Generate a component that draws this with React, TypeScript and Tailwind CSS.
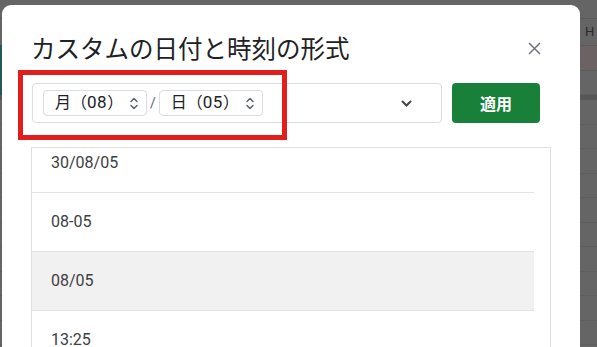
import React from 'react';

const jp = { fontFamily: '"Noto Sans CJK JP", "Noto Sans", sans-serif' };
const rb = { fontFamily: 'Roboto, "Noto Sans CJK JP", sans-serif' };

const UpDown = () => (
  <svg width="8" height="13" viewBox="0 0 8 13" fill="none" stroke="#5f6368" strokeWidth="1.5" strokeLinecap="round" strokeLinejoin="round">
    <path d="M1 4.5 L4 1.5 L7 4.5" />
    <path d="M1 8.5 L4 11.5 L7 8.5" />
  </svg>
);

const Chip = ({ kanji, num }: { kanji: string; num: string }) => (
  <div className="flex items-center justify-between w-[104px] h-[26px] border border-[#dadce0] rounded-[4px] pl-[11px] pr-[8px] text-[16px] text-[#202124]" style={rb}>
    <span>
      {kanji}（<span className="text-[17px] tracking-[0.5px]">{num}</span>）
    </span>
    <UpDown />
  </div>
);

const rows = ['30/08/05', '08-05', '08/05', '13:25'];

const App: React.FC = () => {
  return (
    <div className="relative w-[597px] h-[347px] overflow-hidden bg-[#656565]">
      {/* spreadsheet behind the overlay */}
      <div className="flex flex-col w-full">
        <div className="h-[19px] border-b border-[#5b5b5b]" />
        <div className="h-[27px] border-b border-[#5b5b5b] flex items-center pl-[585px] text-[13px] text-[#2a2a2a]" style={rb}>H</div>
        <div className="h-[25px] bg-[#6b6264] border-b border-[#5b5b5b]" />
        <div className="h-[24px] border-b border-[#5e5e5e]" />
        <div className="h-[5px] bg-[#575757]" />
        {Array.from({ length: 10 }).map((_, i) => (
          <div key={i} className="h-[24.5px] border-b border-[#5e5e5e] shrink-0" />
        ))}
      </div>
      <div className="absolute left-0 top-[45px] w-[3px] h-[50px] bg-[#23595d]" />

      {/* dialog */}
      <div className="absolute left-[2px] top-[5px] w-[578px] h-[360px] bg-white rounded-t-[9px] pl-[29px] pr-[40px] pt-[27px]">
        <div className="flex items-center justify-between h-[32px]">
          <h1 className="text-[24.5px] leading-[32px] text-[#202124]" style={jp}>カスタムの日付と時刻の形式</h1>
          <svg width="13" height="13" viewBox="0 0 13 13" stroke="#6f7378" strokeWidth="1.5" className="mr-[-1px]">
            <path d="M1 1 L12 12 M12 1 L1 12" />
          </svg>
        </div>

        <div className="flex items-center gap-[10px] mt-[19px] pl-[1px]">
          <div className="flex items-center w-[410px] h-[40px] border border-[#dadce0] rounded-[4px] pl-[10px] pr-[29px]">
            <Chip kanji="月" num="08" />
            <span className="mx-[3px] text-[14px] text-[#5f6368]" style={rb}>/</span>
            <Chip kanji="日" num="05" />
            <svg width="11" height="7" viewBox="0 0 11 7" fill="none" stroke="#444746" strokeWidth="2" className="ml-auto">
              <path d="M1 1 L5.5 5.5 L10 1" />
            </svg>
          </div>
          <button className="w-[88px] h-[40px] rounded-[4px] bg-[#188038] text-white text-[16px] font-bold" style={jp}>適用</button>
        </div>

        <div className="mt-[24px] w-[520px] h-[220px] border border-[#e0e0e0] overflow-hidden">
          <div className="w-[502px] -mt-[14px]">
            {rows.map((r, i) => (
              <div
                key={r}
                className={`h-[59px] flex items-center pl-[19px] text-[16px] text-[#3c4043] border-b border-[#e3e3e3] ${i === 2 ? 'bg-[#f1f1f1]' : ''}`}
                style={rb}
              >
                {r}
              </div>
            ))}
          </div>
        </div>

        {/* red highlight box */}
        <div className="absolute left-[16px] top-[65px] w-[269px] h-[70px] border-[5px] border-[#e11d1d]" />
      </div>
    </div>
  );
};

export default App;
